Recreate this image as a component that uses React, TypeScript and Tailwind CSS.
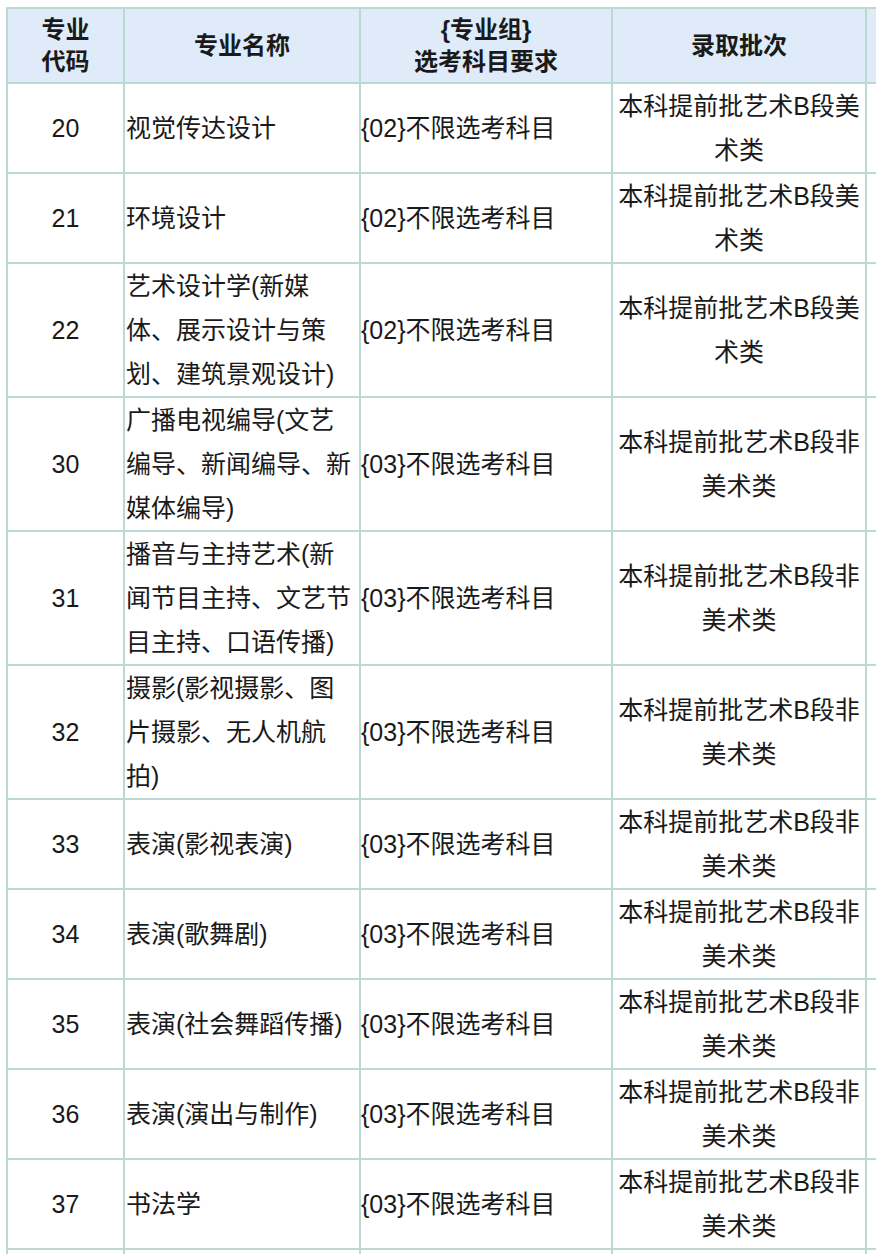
import React from "react";

type Row = { code: string; name: string[]; group: string; batch: string[]; h: string };

const rows: Row[] = [
  { code: "20", name: ["视觉传达设计"], group: "{02}不限选考科目", batch: ["本科提前批艺术B段美", "术类"], h: "h-[90px]" },
  { code: "21", name: ["环境设计"], group: "{02}不限选考科目", batch: ["本科提前批艺术B段美", "术类"], h: "h-[90px]" },
  { code: "22", name: ["艺术设计学(新媒", "体、展示设计与策", "划、建筑景观设计)"], group: "{02}不限选考科目", batch: ["本科提前批艺术B段美", "术类"], h: "h-[134px]" },
  { code: "30", name: ["广播电视编导(文艺", "编导、新闻编导、新", "媒体编导)"], group: "{03}不限选考科目", batch: ["本科提前批艺术B段非", "美术类"], h: "h-[134px]" },
  { code: "31", name: ["播音与主持艺术(新", "闻节目主持、文艺节", "目主持、口语传播)"], group: "{03}不限选考科目", batch: ["本科提前批艺术B段非", "美术类"], h: "h-[134px]" },
  { code: "32", name: ["摄影(影视摄影、图", "片摄影、无人机航", "拍)"], group: "{03}不限选考科目", batch: ["本科提前批艺术B段非", "美术类"], h: "h-[134px]" },
  { code: "33", name: ["表演(影视表演)"], group: "{03}不限选考科目", batch: ["本科提前批艺术B段非", "美术类"], h: "h-[90px]" },
  { code: "34", name: ["表演(歌舞剧)"], group: "{03}不限选考科目", batch: ["本科提前批艺术B段非", "美术类"], h: "h-[90px]" },
  { code: "35", name: ["表演(社会舞蹈传播)"], group: "{03}不限选考科目", batch: ["本科提前批艺术B段非", "美术类"], h: "h-[90px]" },
  { code: "36", name: ["表演(演出与制作)"], group: "{03}不限选考科目", batch: ["本科提前批艺术B段非", "美术类"], h: "h-[90px]" },
  { code: "37", name: ["书法学"], group: "{03}不限选考科目", batch: ["本科提前批艺术B段非", "美术类"], h: "h-[90px]" },
];

const cell = "border-r-2 border-b-2 border-[#b9d9d2] flex flex-col justify-center";

export default function App() {
  return (
    <div
      className="w-[876px] h-[1254px] overflow-hidden bg-white text-[#1a1a1a]"
      style={{ fontFamily: '"Liberation Sans", "Noto Sans CJK SC", sans-serif' }}
    >
      <div className="pl-[6px] pt-[7px]">
        <div className="w-[1100px] border-l-2 border-t-2 border-[#b9d9d2]">
          {/* header */}
          <div className="grid grid-cols-[117px_236px_252px_254px_1fr] h-[75px] bg-[#dfebf9] font-bold text-[24px] leading-[32px] text-center">
            <div className={cell + " items-center"}>
              <span>专业</span>
              <span>代码</span>
            </div>
            <div className={cell + " items-center"}>专业名称</div>
            <div className={cell + " items-center"}>
              <span>{"{专业组}"}</span>
              <span>选考科目要求</span>
            </div>
            <div className={cell + " items-center"}>录取批次</div>
            <div className={cell}></div>
          </div>
          {rows.map((r) => (
            <div
              key={r.code}
              className={"grid grid-cols-[117px_236px_252px_254px_1fr] text-[25px] leading-[44px] " + r.h}
            >
              <div className={cell + " items-center"}>{r.code}</div>
              <div className={cell + " pl-[1px] whitespace-nowrap"}>
                {r.name.map((l) => (
                  <span key={l}>{l}</span>
                ))}
              </div>
              <div className={cell + " whitespace-nowrap"}>{r.group}</div>
              <div className={cell + " items-center whitespace-nowrap"}>
                {r.batch.map((l) => (
                  <span key={l}>{l}</span>
                ))}
              </div>
              <div className={cell}></div>
            </div>
          ))}
          <div className="grid grid-cols-[117px_236px_252px_254px_1fr] h-[90px]">
            <div className={cell}></div>
            <div className={cell}></div>
            <div className={cell}></div>
            <div className={cell}></div>
            <div className={cell}></div>
          </div>
        </div>
      </div>
    </div>
  );
}
